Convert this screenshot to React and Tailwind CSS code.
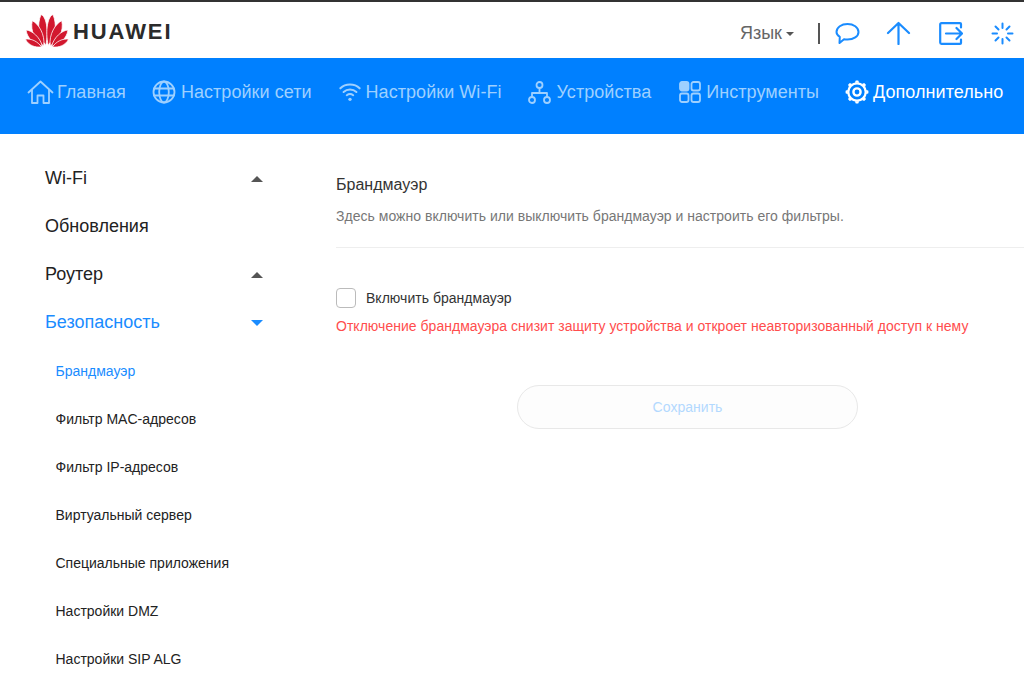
import React from "react";

const Logo = () => (
  <svg width="44" height="35" viewBox="0 0 40 32" className="shrink-0">
    <g fill="#d2172e" stroke="#ffffff" strokeWidth="0.7">
      <path d="M18.9 29.5 C11.5 21 11 10 14.5 1.5 C19 2.5 22 16 18.9 29.5Z" />
      <path d="M21.1 29.5 C28.5 21 29 10 25.5 1.5 C21 2.5 18 16 21.1 29.5Z" />
      <path d="M17 30 C9 25 4.5 16.5 6.5 7 C12 9.5 18.5 19.5 17 30Z" />
      <path d="M23 30 C31 25 35.5 16.5 33.5 7 C28 9.5 21.5 19.5 23 30Z" />
      <path d="M15.8 30.4 C8.5 29 2 23.5 0.8 15.5 C6.5 16 13.5 22 15.8 30.4Z" />
      <path d="M24.2 30.4 C31.5 29 38 23.5 39.2 15.5 C33.5 16 26.5 22 24.2 30.4Z" />
      <path d="M15 31 C9 31.8 3.2 29.6 0.2 24 C5.5 23 11.5 26 15 31Z" />
      <path d="M25 31 C31 31.8 36.8 29.6 39.8 24 C34.5 23 28.5 26 25 31Z" />
    </g>
  </svg>
);

const iconProps = { fill: "none", stroke: "currentColor", strokeLinecap: "round", strokeLinejoin: "round" };

const HomeIcon = () => (
  <svg width="27" height="25" viewBox="0 0 27 25" {...iconProps} strokeWidth="1.8">
    <path d="M1.5 12.5 L13.5 1.5 L25.5 12.5" />
    <path d="M5 10 V23 H10.5 V15.5 H16.5 V23 H22 V10" />
  </svg>
);
const GlobeIcon = () => (
  <svg width="24" height="24" viewBox="0 0 24 24" {...iconProps} strokeWidth="1.8">
    <circle cx="12" cy="12" r="10.5" />
    <ellipse cx="12" cy="12" rx="4.8" ry="10.5" />
    <path d="M2 8.5 H22 M2 15.5 H22" />
  </svg>
);
const WifiIcon = () => (
  <svg width="22" height="22" viewBox="0 0 24 24" {...iconProps} strokeWidth="2.2">
    <path d="M1.5 8 C7 2.5 17 2.5 22.5 8" />
    <path d="M5 12 C9 8.5 15 8.5 19 12" />
    <path d="M8.5 15.5 C10.5 14 13.5 14 15.5 15.5" />
    <circle cx="12" cy="20" r="1.8" fill="currentColor" stroke="none" />
  </svg>
);
const TreeIcon = () => (
  <svg width="23" height="23" viewBox="0 0 23 23" {...iconProps} strokeWidth="1.8">
    <circle cx="11.5" cy="4" r="3" />
    <circle cx="4" cy="19" r="3" />
    <circle cx="19" cy="19" r="3" />
    <path d="M11.5 7 V12 M4 16 V12 H19 V16" />
  </svg>
);
const GridIcon = () => (
  <svg width="22" height="22" viewBox="0 0 22 22" {...iconProps} strokeWidth="1.8">
    <rect x="1" y="1" width="8.5" height="8.5" rx="2" fill="currentColor" />
    <rect x="12.5" y="1" width="8.5" height="8.5" rx="2" />
    <rect x="1" y="12.5" width="8.5" height="8.5" rx="2" />
    <rect x="12.5" y="12.5" width="8.5" height="8.5" rx="2" />
  </svg>
);
const GearIcon = () => (
  <svg width="24" height="26" viewBox="0 0 24 26" fill="none">
    {[0, 45, 90, 135, 180, 225, 270, 315].map((a) => (
      <path key={a} transform={`rotate(${a} 12 13)`} d="M9.8 3.8 L10.8 1.6 H13.2 L14.2 3.8Z" fill="white" />
    ))}
    <circle cx="12" cy="13" r="8.7" stroke="white" strokeWidth="2.2" />
    <circle cx="12" cy="13" r="3.6" stroke="white" strokeWidth="2.4" />
  </svg>
);

const nav = [
  { icon: <HomeIcon />, label: "Главная", cls: "gap-[3px] mr-[26px]" },
  { icon: <GlobeIcon />, label: "Настройки сети", cls: "gap-[5px] mr-[27px]" },
  { icon: <WifiIcon />, label: "Настройки Wi-Fi", cls: "gap-[5px] mr-[26px]" },
  { icon: <TreeIcon />, label: "Устройства", cls: "gap-[6px] mr-[28px]" },
  { icon: <GridIcon />, label: "Инструменты", cls: "gap-[5px] mr-[26px]" },
];

const Up = () => <span className="mt-[2px] w-0 h-0 border-x-[6px] border-x-transparent border-b-[6px] border-b-[#555555]" />;
const Down = () => <span className="mt-[2px] w-0 h-0 border-x-[6px] border-x-transparent border-t-[6px] border-t-[#1a8cff]" />;

const top = [
  { t: "Wi-Fi", c: "text-[#222222]", a: <Up /> },
  { t: "Обновления", c: "text-[#222222]" },
  { t: "Роутер", c: "text-[#222222]", a: <Up /> },
  { t: "Безопасность", c: "text-[#1a8cff]", a: <Down /> },
];
const subs = ["Брандмауэр", "Фильтр MAC-адресов", "Фильтр IP-адресов", "Виртуальный сервер", "Специальные приложения", "Настройки DMZ", "Настройки SIP ALG"];

export default function App() {
  return (
    <div className="w-[1024px] h-[690px] overflow-hidden bg-white flex flex-col font-['Liberation_Sans',Arial,sans-serif]">
      <header className="h-[58px] shrink-0 border-t-2 border-[#333333] flex items-center pl-[25px]">
        <Logo />
        <span className="ml-[4px] mt-[4px] text-[22px] leading-none font-bold tracking-[1.9px] text-[#2b2b2b]">HUAWEI</span>
        <div className="ml-auto mt-[6px] flex items-center">
          <span className="text-[18px] text-[#666666]">Язык</span>
          <span className="ml-[4px] mt-[2px] w-0 h-0 border-x-[4px] border-x-transparent border-t-[4px] border-t-[#555555]" />
          <span className="ml-[24px] w-[2px] h-[21px] bg-[#555555]" />
          <svg className="ml-[15px]" width="25" height="23" viewBox="0 0 25 23" fill="none" stroke="#1a8cff" strokeWidth="2" strokeLinejoin="round">
            <path d="M12.5 2 C18.5 2 23.5 5.3 23.5 10 C23.5 14.5 18.5 17.5 12.5 17.5 C11 17.5 10 17.4 9 17.2 L4.5 21 L4.8 14.8 C2.6 13.5 1.5 11.8 1.5 10 C1.5 5.3 6.5 2 12.5 2Z" />
          </svg>
          <svg className="ml-[26px]" width="25" height="24" viewBox="0 0 25 24" fill="none" stroke="#1a8cff" strokeWidth="2.2" strokeLinecap="round" strokeLinejoin="round">
            <path d="M12.5 2 V23 M2 12 L12.5 2 L23 12" />
          </svg>
          <svg className="ml-[28px]" width="24" height="23" viewBox="0 0 24 23" fill="none" stroke="#1a8cff" strokeWidth="2.2" strokeLinecap="round" strokeLinejoin="round">
            <path d="M22 5.5 V2 Q22 1.2 21 1.2 H2.5 Q1.2 1.2 1.2 2.5 V20.5 Q1.2 21.8 2.5 21.8 H21 Q22 21.8 22 21 V17.5" />
            <path d="M7 11.5 H22.5 M17.5 6 L23 11.5 L17.5 17" />
          </svg>
          <svg className="ml-[28px] mr-[10px]" width="23" height="23" viewBox="0 0 23 23" fill="none" stroke="#1a8cff" strokeWidth="2" strokeLinecap="round">
            <path d="M11.5 1.5 V6 M11.5 17 V21.5 M1.5 11.5 H6 M17 11.5 H21.5 M4.5 4.5 L7.5 7.5 M15.5 15.5 L18.5 18.5 M18.5 4.5 L15.5 7.5 M7.5 15.5 L4.5 18.5" />
          </svg>
        </div>
      </header>

      <nav className="h-[76px] shrink-0 bg-[#0080ff] flex items-start pt-[21px] pl-[27px] text-[18px] leading-[24px] tracking-[0.05px]">
        {nav.map((n) => (
          <div key={n.label} className={`flex items-center h-[26px] ${n.cls} text-[#9ed0ff]`}>
            {n.icon}
            <span className="whitespace-nowrap">{n.label}</span>
          </div>
        ))}
        <div className="flex items-center h-[26px] gap-[4px] text-white">
          <GearIcon />
          <span className="whitespace-nowrap">Дополнительно</span>
        </div>
      </nav>

      <div className="flex flex-1 min-h-0">
        <aside className="w-[336px] shrink-0 pl-[45px] pt-[20px]">
          <div className="w-[218px] mb-[1px]">
            {top.map((x) => (
              <div key={x.t} className={`h-[48px] flex items-center justify-between text-[18px] ${x.c}`}>
                <span>{x.t}</span>
                {x.a}
              </div>
            ))}
          </div>
          <ul className="pl-[10.5px]">
            {subs.map((s, i) => (
              <li key={s} className={`h-[48px] flex items-center text-[14px] ${i === 0 ? "text-[#1a8cff]" : "text-[#222222]"}`}>{s}</li>
            ))}
          </ul>
        </aside>
        <main className="flex-1 pt-[39px] tracking-[0.025px]">
          <h1 className="text-[16px] leading-[24px] text-[#333333]">Брандмауэр</h1>
          <p className="mt-[9px] text-[14px] leading-[20px] text-[#777777]">Здесь можно включить или выключить брандмауэр и настроить его фильтры.</p>
          <div className="mt-[21px] h-px bg-[#eeeeee]" />
          <label className="mt-[39px] flex items-center gap-[10px] h-[22px]">
            <span className="w-[20px] h-[20px] rounded-[4px] border border-[#bbbbbb] bg-white" />
            <span className="text-[14px] text-[#333333]">Включить брандмауэр</span>
          </label>
          <p className="mt-[7px] text-[14px] leading-[20px] text-[#ff4d4d] whitespace-nowrap">Отключение брандмауэра снизит защиту устройства и откроет неавторизованный доступ к нему</p>
          <button disabled className="block mt-[49px] ml-[181px] w-[341px] h-[44px] rounded-[22px] border border-[#e8e8e8] bg-[#fdfdfd] text-[14px] text-[#b3d9ff]">Сохранить</button>
        </main>
      </div>
    </div>
  );
}
